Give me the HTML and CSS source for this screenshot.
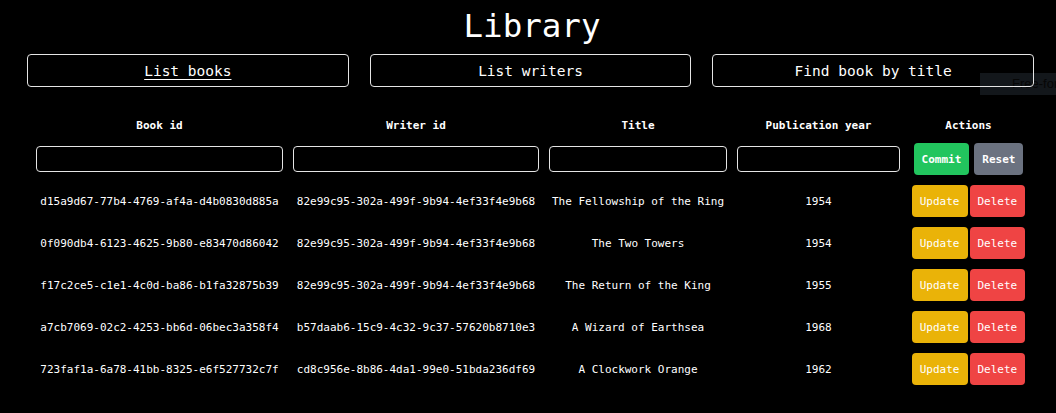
FILE: index.html
```html
<!DOCTYPE html>
<html>
<head>
<meta charset="utf-8">
<link rel="stylesheet" href="styles.css">
</head>
<body>
<div class="app">
  <h1 class="title">Library</h1>
  <nav class="nav">
    <button class="nav-btn active">List books</button>
    <button class="nav-btn">List writers</button>
    <button class="nav-btn">Find book by title</button>
  </nav>
  <div class="tip">Free-form</div>
  <table class="books">
    <colgroup>
      <col class="c1"><col class="c2"><col class="c3"><col class="c4"><col class="c5">
    </colgroup>
    <thead>
      <tr>
        <th>Book id</th><th>Writer id</th><th>Title</th><th>Publication year</th><th>Actions</th>
      </tr>
    </thead>
    <tbody>
      <tr class="edit">
        <td><input class="field" type="text"></td>
        <td><input class="field" type="text"></td>
        <td><input class="field" type="text"></td>
        <td><input class="field" type="text"></td>
        <td><div class="acts wide"><button class="btn green">Commit</button><button class="btn gray">Reset</button></div></td>
      </tr>
      <tr>
        <td>d15a9d67-77b4-4769-af4a-d4b0830d885a</td><td>82e99c95-302a-499f-9b94-4ef33f4e9b68</td><td>The Fellowship of the Ring</td><td>1954</td>
        <td><div class="acts"><button class="btn yellow">Update</button><button class="btn red">Delete</button></div></td>
      </tr>
      <tr>
        <td>0f090db4-6123-4625-9b80-e83470d86042</td><td>82e99c95-302a-499f-9b94-4ef33f4e9b68</td><td>The Two Towers</td><td>1954</td>
        <td><div class="acts"><button class="btn yellow">Update</button><button class="btn red">Delete</button></div></td>
      </tr>
      <tr>
        <td>f17c2ce5-c1e1-4c0d-ba86-b1fa32875b39</td><td>82e99c95-302a-499f-9b94-4ef33f4e9b68</td><td>The Return of the King</td><td>1955</td>
        <td><div class="acts"><button class="btn yellow">Update</button><button class="btn red">Delete</button></div></td>
      </tr>
      <tr>
        <td>a7cb7069-02c2-4253-bb6d-06bec3a358f4</td><td>b57daab6-15c9-4c32-9c37-57620b8710e3</td><td>A Wizard of Earthsea</td><td>1968</td>
        <td><div class="acts"><button class="btn yellow">Update</button><button class="btn red">Delete</button></div></td>
      </tr>
      <tr>
        <td>723faf1a-6a78-41bb-8325-e6f527732c7f</td><td>cd8c956e-8b86-4da1-99e0-51bda236df69</td><td>A Clockwork Orange</td><td>1962</td>
        <td><div class="acts"><button class="btn yellow">Update</button><button class="btn red">Delete</button></div></td>
      </tr>
    </tbody>
  </table>
</div>
</body>
</html>
```
FILE: styles.css
```css
html, body {
  margin: 0;
  padding: 0;
  background: #000;
  overflow: hidden;
}
body {
  font-family: "DejaVu Sans Mono", monospace;
  color: #fff;
}
.app {
  position: relative;
  width: 1056px;
  height: 413px;
  overflow: hidden;
}
.title {
  margin: 0;
  padding-top: 6px;
  height: 48px;
  box-sizing: border-box;
  font-size: 32.5px;
  font-weight: normal;
  line-height: 40px;
  text-align: center;
  padding-left: 8px;
}
.nav {
  display: flex;
  gap: 21px;
  padding: 0 22px 0 27px;
  margin-top: 6px;
}
.nav-btn {
  position: relative;
  z-index: 1;
  flex: 1;
  height: 33px;
  background: transparent;
  border: 1px solid #e5e5e5;
  border-radius: 4px;
  color: #fff;
  font-family: "DejaVu Sans Mono", monospace;
  font-size: 14.5px;
  padding: 0;
}
.nav-btn.active {
  text-decoration: underline;
  text-underline-offset: 3px;
}
.tip {
  position: absolute;
  left: 980px;
  top: 73px;
  width: 76px;
  height: 22px;
  background: #13171b;
  color: #060606;
  font-family: "Liberation Sans", sans-serif;
  font-size: 13px;
  line-height: 22px;
  padding-left: 32px;
  white-space: nowrap;
  overflow: hidden;
  box-sizing: border-box;
}
.books {
  margin: 27px 0 0 31px;
  table-layout: fixed;
  border-collapse: collapse;
  width: 1001px;
  font-size: 11px;
}
.c1 { width: 257px; }
.c2 { width: 256px; }
.c3 { width: 188px; }
.c4 { width: 173px; }
.c5 { width: 127px; }
.books th {
  font-weight: bold;
  height: 22px;
  padding: 0 5px 2px;
  text-align: center;
  vertical-align: middle;
}
.books td {
  height: 32px;
  padding: 5px;
  text-align: center;
  vertical-align: middle;
  white-space: nowrap;
}
.field {
  display: block;
  width: 100%;
  height: 26px;
  box-sizing: border-box;
  background: #000;
  border: 1px solid #e5e5e5;
  border-radius: 4px;
}
.acts {
  display: flex;
  justify-content: center;
  gap: 2px;
}
.acts.wide {
  gap: 5px;
}
.btn {
  height: 32px;
  padding: 0 8px;
  border: none;
  border-radius: 4px;
  color: #fff;
  font-family: "DejaVu Sans Mono", monospace;
  font-size: 11px;
}
.edit .btn {
  font-weight: bold;
}
.green { background: #22c55e; }
.gray { background: #6b7280; }
.yellow { background: #eab308; }
.red { background: #ef4444; }
```
